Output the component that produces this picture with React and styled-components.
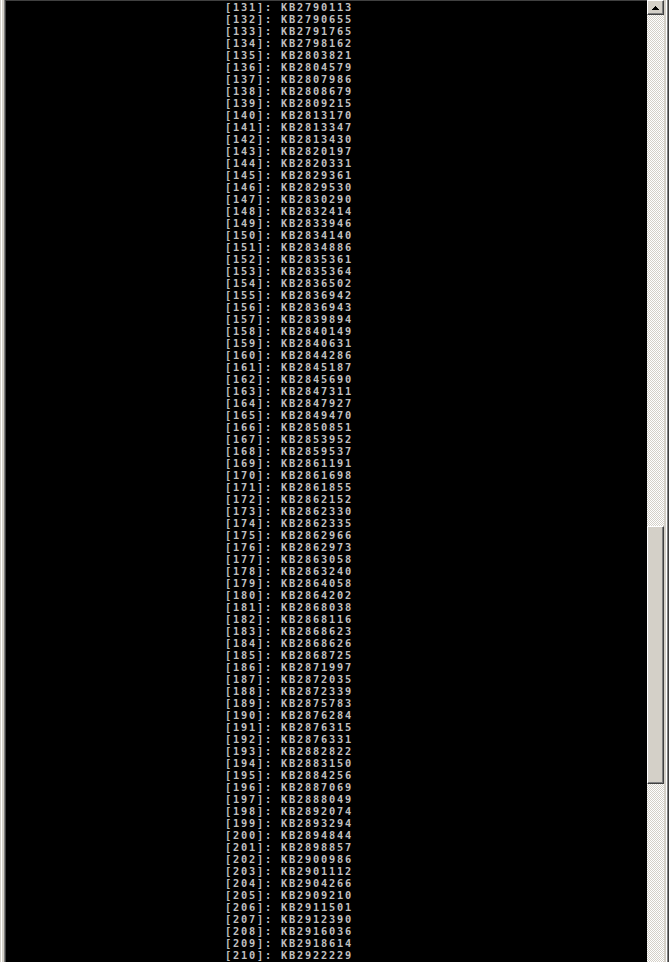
import React from 'react';
import styled, {createGlobalStyle} from 'styled-components';

const GlobalStyle = createGlobalStyle`
  html, body {
    margin: 0;
    padding: 0;
    background: #000;
    overflow: hidden;
  }
`;

const Frame = styled.div`
  width: 669px;
  height: 962px;
  display: flex;
  overflow: hidden;
`;

const LeftEdge = styled.div`
  width: 6px;
  flex: none;
  background: linear-gradient(to right,
    #d4d0c8 0 1px, #ffffff 1px 2px, #d4d0c8 2px 4px,
    #808080 4px 5px, #404040 5px 6px);
`;

const RightEdge = styled.div`
  width: 5px;
  flex: none;
  background: linear-gradient(to right,
    #d4d0c8 0 2px, #ffffff 2px 3px, #808080 3px 4px, #404040 4px 5px);
`;

const Console = styled.div`
  flex: 1;
  background: #000;
  border-top: 1px solid #404040;
  overflow: hidden;
  padding: 0 0 0 219px;
`;

// raster console font: 8px cells, 12px rows
const Line = styled.div`
  font-family: "DejaVu Sans Mono", "Liberation Mono", monospace;
  font-weight: bold;
  font-size: 10.3px;
  letter-spacing: 1.8px;
  line-height: 12px;
  height: 12px;
  color: #c0c0c0;
  white-space: pre;
`;

const ScrollBar = styled.div`
  width: 17px;
  flex: none;
  display: flex;
  flex-direction: column;
  background: repeating-conic-gradient(#d4d0c8 0 25%, #ffffff 0 50%) 0 0 / 2px 2px;
`;

const Raised = styled.div`
  box-sizing: border-box;
  background: #d4d0c8;
  border-top: 1px solid #ffffff;
  border-left: 1px solid #ffffff;
  border-right: 1px solid #404040;
  border-bottom: 1px solid #404040;
  box-shadow: inset -1px -1px 0 #808080, inset 1px 1px 0 #d4d0c8;
`;

const ArrowButton = styled(Raised)`
  height: 15px;
  flex: none;
  display: flex;
  align-items: center;
  justify-content: center;
`;

const Track = styled.div`
  height: ${p => p.$h}px;
  flex: none;
`;

const Thumb = styled(Raised)`
  height: ${p => p.$h}px;
  flex: none;
`;

const ids = [
  '2790113', '2790655', '2791765', '2798162', '2803821', '2804579', '2807986', '2808679',
  '2809215', '2813170', '2813347', '2813430', '2820197', '2820331', '2829361', '2829530',
  '2830290', '2832414', '2833946', '2834140', '2834886', '2835361', '2835364', '2836502',
  '2836942', '2836943', '2839894', '2840149', '2840631', '2844286', '2845187', '2845690',
  '2847311', '2847927', '2849470', '2850851', '2853952', '2859537', '2861191', '2861698',
  '2861855', '2862152', '2862330', '2862335', '2862966', '2862973', '2863058', '2863240',
  '2864058', '2864202', '2868038', '2868116', '2868623', '2868626', '2868725', '2871997',
  '2872035', '2872339', '2875783', '2876284', '2876315', '2876331', '2882822', '2883150',
  '2884256', '2887069', '2888049', '2892074', '2893294', '2894844', '2898857', '2900986',
  '2901112', '2904266', '2909210', '2911501', '2912390', '2916036', '2918614', '2922229',
];

export default function App() {
  return (
    <>
      <GlobalStyle/>
      <Frame>
        <LeftEdge/>
        <Console>
          {ids.map((kb, i) => (
            <Line key={kb}>{`[${131 + i}]: KB${kb}`}</Line>
          ))}
        </Console>
        <ScrollBar>
          <ArrowButton>
            <svg width="7" height="4" viewBox="0 0 7 4">
              <path d="M3 0h1v1h1v1h1v1h1v1H0V3h1V2h1V1h1z" fill="#000"/>
            </svg>
          </ArrowButton>
          <Track $h={511}/>
          <Thumb $h={258}/>
        </ScrollBar>
        <RightEdge/>
      </Frame>
    </>
  );
}
